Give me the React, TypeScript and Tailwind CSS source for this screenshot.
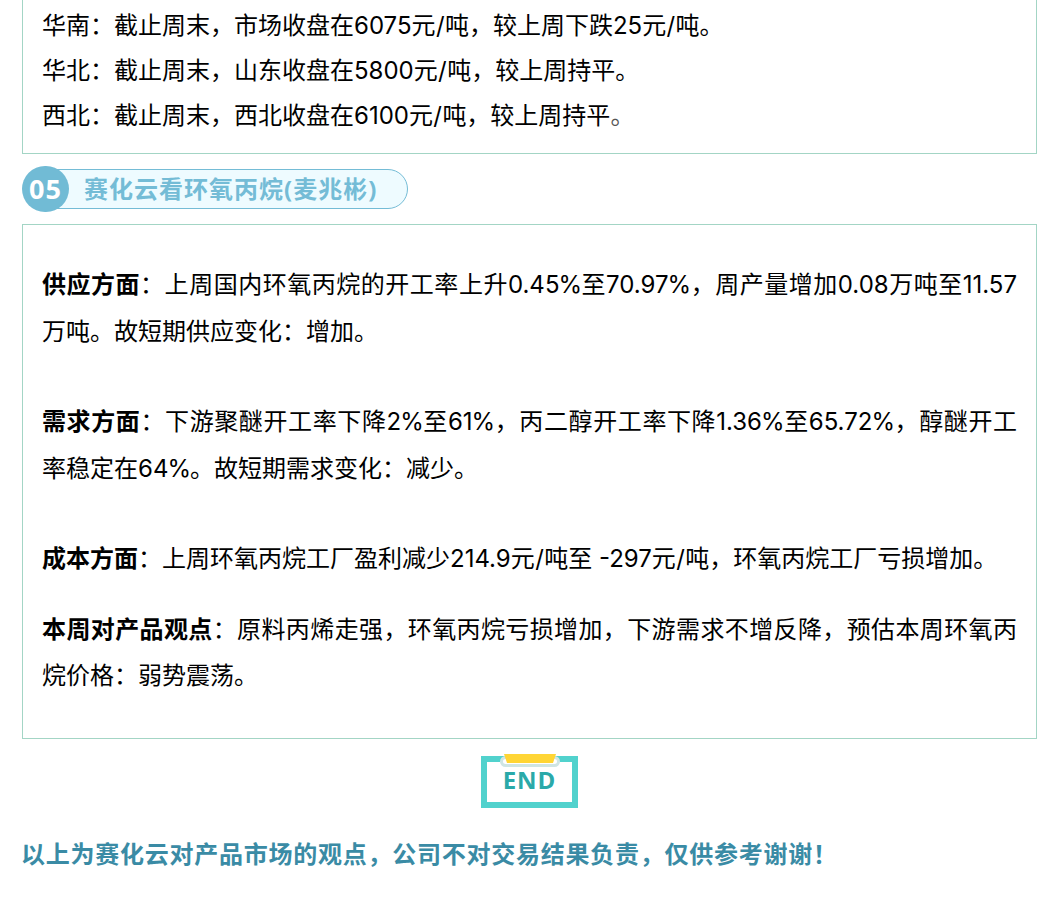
const font = "font-['Inter','Noto_Sans_CJK_SC',sans-serif]";

function Label({ children }: { children: string }) {
  return <b className="font-bold">{children}</b>;
}

// the reference's slash runs wider and its percent sign narrower than Inter's
function Slash() {
  return <span className="px-[0.4px]">/</span>;
}

function Pct() {
  return <span className="-mx-[1px]">%</span>;
}

export default function App() {
  return (
    <div className={`h-[908px] w-[1061px] overflow-hidden bg-white pl-[22px] text-[24px] text-black ${font}`}>
      <div className="h-[154px] w-[1015px] border-x border-b border-[#a3d5c5] pl-[19px] pt-[3px] leading-[45px]">
        <p>华南：截止周末，市场收盘在6075元<Slash />吨，较上周下跌25元<Slash />吨。</p>
        <p>华北：截止周末，山东收盘在5800元<Slash />吨，较上周持平。</p>
        <p>西北：截止周末，西北收盘在6100元<Slash />吨，较上周持平<span className="text-[#555]">。</span></p>
      </div>

      <div className="mt-3 flex h-[46px] items-center font-['Open_Sans','Noto_Sans_CJK_SC',sans-serif]">
        <div className="z-10 flex h-[46px] w-[47px] shrink-0 items-center justify-center rounded-full bg-[#71bbd5] text-[27px] font-bold tracking-[1px] text-white">
          05
        </div>
        <div className="-ml-[24px] flex h-10 w-[363px] items-center rounded-r-[20px] border border-[#74bcd6] bg-[#eefbff] pl-[38px] text-[24px] font-bold tracking-[1px] text-[#74bcd6]">
          赛化云看环氧丙烷(麦兆彬)
        </div>
      </div>

      <div className="mt-3 h-[515px] w-[1015px] border border-[#a3d5c5] pl-[19px] pr-[19px] pt-[37px] leading-[46.5px]">
        <p className="text-justify">
          <Label>供应方面</Label>：上周国内环氧丙烷的开工率上升0.45<Pct />至70.97<Pct />，周产量增加0.08万吨至11.57万吨。故短期供应变化：增加。
        </p>
        <p className="mt-[44px] text-justify">
          <Label>需求方面</Label>：下游聚醚开工率下降2<Pct />至61<Pct />，丙二醇开工率下降1.36<Pct />至65.72<Pct />，醇醚开工率稳定在64<Pct />。故短期需求变化：减少。
        </p>
        <p className="mt-[44px]">
          <Label>成本方面</Label>：上周环氧丙烷工厂盈利减少214.9元<Slash />吨至 -297元<Slash />吨，环氧丙烷工厂亏损增加。
        </p>
        <p className="mt-[24px] text-justify">
          <Label>本周对产品观点</Label>：原料丙烯走强，环氧丙烷亏损增加，下游需求不增反降，预估本周环氧丙烷价格：弱势震荡。
        </p>
      </div>

      <div className="mt-[17px] flex w-[1015px] justify-center font-['Open_Sans',sans-serif]">
        <div className="relative flex h-[52px] w-[97px] items-center justify-center border-[6px] border-[#51d2cd] pb-[4px] text-[24px] font-bold tracking-[1px] text-[#2aa9a9]">
          <svg className="absolute -left-[6px] -top-[8px]" width="97" height="18" viewBox="0 0 97 18">
            <rect x="20.5" y="3.5" width="57" height="8" rx="4" fill="#fff" stroke="#cfe5e4" strokeWidth="3" />
            <path d="M23 0 H75 L72 9 H26 Z" fill="#ffd535" />
          </svg>
          END
        </div>
      </div>

      <p className="-ml-px mt-[29px] whitespace-nowrap text-[24px] font-bold leading-[36px] tracking-[0.75px] text-[#3a8ba5]">
        以上为赛化云对产品市场的观点，公司不对交易结果负责，仅供参考谢谢！
      </p>
    </div>
  );
}
